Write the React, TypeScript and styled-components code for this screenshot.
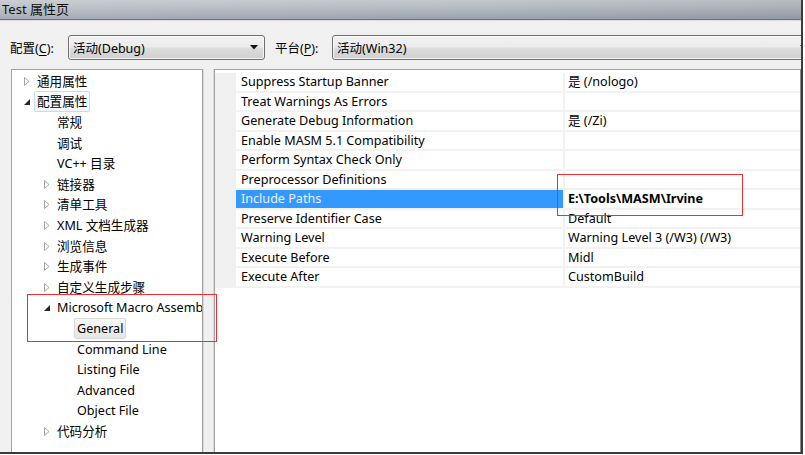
import React from 'react'
import styled, { createGlobalStyle } from 'styled-components'

type TreeNode = {
  label: string
  level: number
  expander?: 'open' | 'closed'
  selected?: 'focus' | 'inactive'
}

type PropRow = {
  name: string
  value: string
  active?: boolean
}

const tree: TreeNode[] = [
  { label: '通用属性', level: 0, expander: 'closed' },
  { label: '配置属性', level: 0, expander: 'open', selected: 'focus' },
  { label: '常规', level: 1 },
  { label: '调试', level: 1 },
  { label: 'VC++ 目录', level: 1 },
  { label: '链接器', level: 1, expander: 'closed' },
  { label: '清单工具', level: 1, expander: 'closed' },
  { label: 'XML 文档生成器', level: 1, expander: 'closed' },
  { label: '浏览信息', level: 1, expander: 'closed' },
  { label: '生成事件', level: 1, expander: 'closed' },
  { label: '自定义生成步骤', level: 1, expander: 'closed' },
  { label: 'Microsoft Macro Assembler', level: 1, expander: 'open' },
  { label: 'General', level: 2, selected: 'inactive' },
  { label: 'Command Line', level: 2 },
  { label: 'Listing File', level: 2 },
  { label: 'Advanced', level: 2 },
  { label: 'Object File', level: 2 },
  { label: '代码分析', level: 1, expander: 'closed' },
]

const props: PropRow[] = [
  { name: 'Suppress Startup Banner', value: '是 (/nologo)' },
  { name: 'Treat Warnings As Errors', value: '' },
  { name: 'Generate Debug Information', value: '是 (/Zi)' },
  { name: 'Enable MASM 5.1 Compatibility', value: '' },
  { name: 'Perform Syntax Check Only', value: '' },
  { name: 'Preprocessor Definitions', value: '' },
  { name: 'Include Paths', value: 'E:\\Tools\\MASM\\Irvine', active: true },
  { name: 'Preserve Identifier Case', value: 'Default' },
  { name: 'Warning Level', value: 'Warning Level 3 (/W3) (/W3)' },
  { name: 'Execute Before', value: 'Midl' },
  { name: 'Execute After', value: 'CustomBuild' },
]

const GlobalStyle = createGlobalStyle`
  html, body {
    margin: 0;
    padding: 0;
    background: #ffffff;
  }
  body {
    font-family: "Noto Sans", "Noto Sans CJK SC", sans-serif;
    font-size: 12.6px;
    color: #000;
  }
`

const Expander: React.FC<{ kind?: 'open' | 'closed' }> = ({ kind }) => (
  <ExpanderBox>
    {kind === 'closed' && (
      <svg width="6" height="9" viewBox="0 0 6 9">
        <path d="M0.5 0.5 L5 4.5 L0.5 8.5 Z" fill="#fff" stroke="#a6a6a6" strokeWidth="1" />
      </svg>
    )}
    {kind === 'open' && (
      <svg width="6" height="6" viewBox="0 0 6 6">
        <path d="M6 0 L6 6 L0 6 Z" fill="#262626" />
      </svg>
    )}
  </ExpanderBox>
)

const ComboBox: React.FC<{ text: string; width?: number }> = ({ text, width }) => (
  <Combo $width={width}>
    <ComboText>{text}</ComboText>
    <svg width="8" height="5" viewBox="0 0 8 5">
      <path d="M0 0 L8 0 L4 4.5 Z" fill="#111" />
    </svg>
  </Combo>
)

const App: React.FC = () => {
  return (
    <>
      <GlobalStyle />
      <Window>
        <TitleBar>Test 属性页</TitleBar>
        <Body>
          <ConfigBar>
            <FieldLabel $width={58}>
              配置(<u>C</u>):
            </FieldLabel>
            <ComboBox text="活动(Debug)" width={197} />
            <FieldLabel $width={57} $gap={10}>
              平台(<u>P</u>):
            </FieldLabel>
            <ComboBox text="活动(Win32)" />
          </ConfigBar>
          <Panes>
            <TreePane>
              {tree.map((n) => (
                <TreeRow key={n.label} $level={n.level}>
                  <Expander kind={n.expander} />
                  <TreeLabel $selected={n.selected}>{n.label}</TreeLabel>
                </TreeRow>
              ))}
            </TreePane>
            <GridPane>
              {props.map((p) => (
                <GridRow key={p.name}>
                  <Gutter />
                  <NameCell $active={p.active}>{p.name}</NameCell>
                  <ValueCell $bold={p.active}>{p.value}</ValueCell>
                </GridRow>
              ))}
            </GridPane>
          </Panes>
        </Body>
        <Marker style={{ left: 27, top: 294, width: 190, height: 48 }} />
        <Marker style={{ left: 557, top: 174, width: 186, height: 42 }} />
      </Window>
    </>
  )
}

export default App

const Window = styled.div`
  position: relative;
  width: 801px;
  height: 452px;
  display: flex;
  flex-direction: column;
  overflow: hidden;
  border-right: 2px solid #3b3b3b;
  border-bottom: 2px solid #3b3b3b;
  background: #f0f0f0;
`

const TitleBar = styled.div`
  height: 19px;
  flex: none;
  padding-left: 2px;
  line-height: 19px;
  font-size: 13px;
  color: #101010;
  background:
    linear-gradient(to right, rgba(255, 255, 255, 0.12), rgba(0, 0, 0, 0) 60%, rgba(0, 0, 0, 0.06)),
    linear-gradient(to bottom, #c3c8cd 0%, #b3b9bf 45%, #9aa2aa 100%);
  border-bottom: 1px solid #6d747b;
`

const Body = styled.div`
  flex: 1;
  display: flex;
  flex-direction: column;
  min-height: 0;
  border-top: 1px solid #d9dcdf;
`

const ConfigBar = styled.div`
  display: flex;
  align-items: center;
  padding: 14px 0 0 10px;
  height: 25px;
  margin-bottom: 9px;
`

const FieldLabel = styled.div<{ $width: number; $gap?: number }>`
  flex: none;
  width: ${(p) => p.$width}px;
  margin-left: ${(p) => p.$gap ?? 0}px;
  font-size: 12.5px;
  u {
    text-decoration-thickness: 1px;
    text-underline-offset: 2px;
  }
`

const Combo = styled.div<{ $width?: number }>`
  box-sizing: border-box;
  height: 25px;
  ${(p) => (p.$width ? `width: ${p.$width}px; flex: none;` : 'flex: 1; margin-right: -14px;')}
  display: flex;
  align-items: center;
  padding: 0 6px 0 4px;
  border: 1px solid #707070;
  border-radius: 3px;
  background: linear-gradient(to bottom, #f2f2f2 0%, #ebebeb 48%, #dddddd 52%, #cfcfcf 100%);
  box-shadow: inset 0 0 0 1px rgba(255, 255, 255, 0.7);
`

const ComboText = styled.span`
  flex: 1;
  font-size: 12.5px;
  white-space: nowrap;
`

const Panes = styled.div`
  flex: 1;
  display: flex;
  gap: 11px;
  padding-left: 11px;
  min-height: 0;
`

const TreePane = styled.div`
  box-sizing: border-box;
  flex: none;
  width: 192px;
  height: 400px;
  padding-top: 1px;
  background: #fff;
  border: 1px solid #a3a3a3;
  border-bottom: none;
  box-shadow: 1px 0 0 #dadada;
  overflow: hidden;
`

const TreeRow = styled.div<{ $level: number }>`
  height: 20.6px;
  display: flex;
  align-items: center;
  padding-left: ${(p) => 8 + p.$level * 20}px;
  white-space: nowrap;
`

const ExpanderBox = styled.span`
  flex: none;
  width: 14px;
  display: flex;
  justify-content: center;
  align-items: center;
`

const TreeLabel = styled.span<{ $selected?: 'focus' | 'inactive' }>`
  box-sizing: border-box;
  height: 21px;
  line-height: 19px;
  padding: 0 2px;
  border: 1px solid transparent;
  border-radius: 2px;
  ${(p) =>
    p.$selected === 'focus' &&
    `border-color: #c6dbf2; background: linear-gradient(to bottom, #fbfdff, #f1f7fe);`}
  ${(p) =>
    p.$selected === 'inactive' &&
    `border-color: #d9d9d9; background: linear-gradient(to bottom, #f8f8f8, #e5e5e5);`}
`

const GridPane = styled.div`
  box-sizing: border-box;
  flex: 1;
  height: 400px;
  padding-top: 3px;
  background: #fff;
  border: 1px solid #a3a3a3;
  border-bottom: none;
  border-right-color: #8a8a8a;
  box-shadow: -1px 0 0 #dadada;
`

const GridRow = styled.div`
  display: grid;
  grid-template-columns: 21px 327px 1fr;
  height: 19.5px;
`

const Gutter = styled.div`
  background: #f0f0f0;
`

const NameCell = styled.div<{ $active?: boolean }>`
  box-sizing: border-box;
  padding-left: 5px;
  line-height: 17.5px;
  white-space: nowrap;
  border-bottom: 2px solid #f2f2f2;
  background: ${(p) => (p.$active ? '#3399ff' : '#fff')};
  color: ${(p) => (p.$active ? '#e8f3ff' : '#000')};
`

const ValueCell = styled.div<{ $bold?: boolean }>`
  box-sizing: border-box;
  padding-left: 3px;
  line-height: 17.5px;
  white-space: nowrap;
  border-left: 2px solid #f2f2f2;
  border-bottom: 2px solid #f2f2f2;
  font-weight: ${(p) => (p.$bold ? 700 : 400)};
`

const Marker = styled.div`
  position: absolute;
  box-sizing: border-box;
  border: 1px solid #ea2f36;
  pointer-events: none;
`
